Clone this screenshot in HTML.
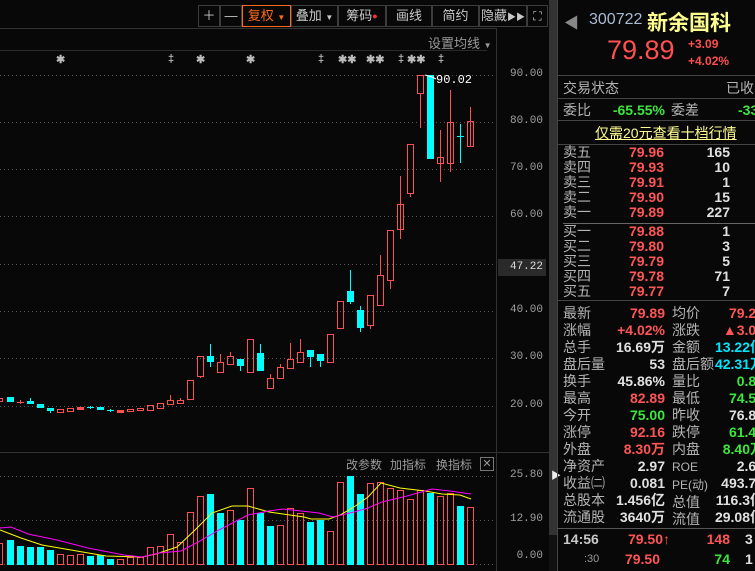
<!DOCTYPE html>
<html><head><meta charset="utf-8"><style>
*{margin:0;padding:0;box-sizing:border-box}
body{width:755px;height:571px;background:#080808;overflow:hidden;position:relative;font-family:"Liberation Sans","Noto Sans CJK SC",sans-serif;color:#c8c8c8}
.a{position:absolute;white-space:nowrap}
.tb{position:absolute;top:5px;height:22px;border:1px solid #3c3c3c;color:#c8c8c8;font-size:13px;line-height:20px;text-align:center}
.lab{position:absolute;left:563px;font-size:14px;color:#b4b4b4;line-height:16px}
.num{position:absolute;font-size:14px;line-height:16px;text-align:right;font-weight:bold;white-space:nowrap}
.r{color:#ff5555}.g{color:#3ce63c}.w{color:#e0e0e0}.c{color:#00e6ff}
.pl{position:absolute;left:498px;width:45px;text-align:right;font-family:"Liberation Mono",monospace;font-size:11px;color:#a0a0a0}
</style></head><body>
<div class="tb" style="left:198px;width:22px">＋</div>
<div class="tb" style="left:220px;width:22px">—</div>
<div class="tb" style="left:242px;width:49px;border-color:#ff6a1a;color:#ff6a1a">复权 <span style="font-size:8px">▼</span></div>
<div class="tb" style="left:291px;width:47px">叠加 <span style="font-size:8px">▼</span></div>
<div class="tb" style="left:338px;width:48px">筹码<span style="color:#ff3030;font-size:9px;vertical-align:top">●</span></div>
<div class="tb" style="left:386px;width:46px">画线</div>
<div class="tb" style="left:432px;width:47px">简约</div>
<div class="tb" style="left:479px;width:48px">隐藏<span style="font-size:9px">▶▶</span></div>
<div class="tb" style="left:527px;width:21px;font-size:12px">⛶</div>
<div class="a" style="left:0;top:28px;width:496px;height:1px;background:#333"></div>
<div class="a" style="left:0;top:50px;width:487px;height:1px;background:#2a2a2a"></div>
<div class="a" style="left:428px;top:33px;font-size:13px;color:#9a9a9a">设置均线 <span style="font-size:8px">▼</span></div>
<div class="a" style="top:53px;left:0;width:496px;height:12px;font-size:11px;color:#bbb;font-weight:bold">
<span class="a" style="left:56px">✱</span><span class="a" style="left:168px">‡</span><span class="a" style="left:196px">✱</span><span class="a" style="left:246px">✱</span><span class="a" style="left:318px">‡</span><span class="a" style="left:338px">✱✱</span><span class="a" style="left:366px">✱✱</span><span class="a" style="left:398px">‡</span><span class="a" style="left:407px">✱✱</span><span class="a" style="left:438px">‡</span>
</div>
<div class="a" style="left:496px;top:28px;width:1px;height:543px;background:#333"></div>
<div class="a" style="left:0;top:452px;width:549px;height:1px;background:#333"></div>
<div class="a" style="left:549px;top:0;width:8px;height:571px;background:#333"></div>
<div class="a" style="left:549px;top:535px;width:8px;height:36px;background:#111"></div>
<div class="a" style="left:551px;top:467px;font-size:10px;color:#eee">▶</div>
<div class="a" style="left:557px;top:0;width:1px;height:571px;background:#444"></div>

<svg class="a" style="left:0;top:0" width="549" height="571" shape-rendering="crispEdges">
<g stroke="#555" stroke-dasharray="1,3" stroke-width="1">
<line x1="0" y1="75.5" x2="495" y2="75.5"/><line x1="0" y1="122.5" x2="495" y2="122.5"/><line x1="0" y1="169.5" x2="495" y2="169.5"/><line x1="0" y1="216.5" x2="495" y2="216.5"/><line x1="0" y1="264.5" x2="495" y2="264.5"/><line x1="0" y1="311.5" x2="495" y2="311.5"/><line x1="0" y1="358.5" x2="495" y2="358.5"/><line x1="0" y1="406.5" x2="495" y2="406.5"/>
<line x1="0" y1="476.5" x2="495" y2="476.5"/><line x1="0" y1="520.5" x2="495" y2="520.5"/><line x1="0" y1="564.5" x2="495" y2="564.5"/>
</g>
<g stroke="#ff5050" stroke-width="1" fill="none">
<line x1="170.5" y1="395" x2="170.5" y2="400"/><line x1="180.5" y1="398" x2="180.5" y2="400"/><line x1="200.5" y1="376" x2="200.5" y2="378"/>
<line x1="220.5" y1="354" x2="220.5" y2="362"/><line x1="230.5" y1="352" x2="230.5" y2="356"/><line x1="270.5" y1="374" x2="270.5" y2="378"/><line x1="280.5" y1="364" x2="280.5" y2="367"/><line x1="290.5" y1="343" x2="290.5" y2="359"/><line x1="300.5" y1="339" x2="300.5" y2="352"/>
<line x1="340.5" y1="328" x2="340.5" y2="329"/><line x1="370.5" y1="325" x2="370.5" y2="329"/><line x1="380.5" y1="255" x2="380.5" y2="275"/><line x1="390.5" y1="280" x2="390.5" y2="289"/><line x1="400.5" y1="176" x2="400.5" y2="239"/><line x1="410.5" y1="193" x2="410.5" y2="197"/><line x1="420.5" y1="93" x2="420.5" y2="128"/><line x1="440.5" y1="130" x2="440.5" y2="182"/><line x1="450.5" y1="90" x2="450.5" y2="172"/><line x1="470.5" y1="107" x2="470.5" y2="147"/><line x1="20.5" y1="400" x2="20.5" y2="404"/><line x1="17" y1="402.5" x2="24" y2="402.5"/>
<rect x="-3.5" y="398.5" width="6" height="3"/>
<rect x="57.5" y="409.5" width="6" height="3"/><rect x="67.5" y="408.5" width="6" height="3"/>
<rect x="127.5" y="409.5" width="6" height="2"/><rect x="137.5" y="408.5" width="6" height="2"/><rect x="147.5" y="405.5" width="6" height="5"/><rect x="157.5" y="403.5" width="6" height="5"/><rect x="167.5" y="400.5" width="6" height="4"/><rect x="177.5" y="400.5" width="6" height="3"/><rect x="187.5" y="380.5" width="6" height="19"/><rect x="197.5" y="356.5" width="6" height="20"/>
<rect x="217.5" y="362.5" width="6" height="10"/><rect x="227.5" y="356.5" width="6" height="8"/><rect x="247.5" y="339.5" width="6" height="33"/><rect x="267.5" y="378.5" width="6" height="10"/><rect x="277.5" y="367.5" width="6" height="11"/><rect x="287.5" y="359.5" width="6" height="9"/><rect x="297.5" y="352.5" width="6" height="10"/>
<rect x="327.5" y="334.5" width="6" height="28"/><rect x="337.5" y="301.5" width="6" height="27"/><rect x="367.5" y="295.5" width="6" height="30"/><rect x="377.5" y="275.5" width="6" height="30"/><rect x="387.5" y="230.5" width="6" height="50"/><rect x="397.5" y="204.5" width="6" height="25"/><rect x="407.5" y="144.5" width="6" height="49"/><rect x="417.5" y="75.5" width="6" height="18"/><rect x="437.5" y="157.5" width="6" height="6"/><rect x="447.5" y="122.5" width="6" height="41"/><rect x="467.5" y="121.5" width="6" height="25"/>
</g>
<g fill="#ff5050"><rect x="77" y="407" width="7" height="3"/><rect x="117" y="410" width="7" height="3"/></g>
<g stroke="#00ffff" stroke-width="1">
<line x1="30.5" y1="398" x2="30.5" y2="401"/><line x1="50.5" y1="411" x2="50.5" y2="413"/><line x1="90.5" y1="406" x2="90.5" y2="409"/><line x1="87" y1="407.5" x2="94" y2="407.5"/><line x1="110.5" y1="409" x2="110.5" y2="412"/><line x1="107" y1="410.5" x2="114" y2="410.5"/>
<line x1="210.5" y1="344" x2="210.5" y2="367"/><line x1="240.5" y1="366" x2="240.5" y2="371"/><line x1="260.5" y1="344" x2="260.5" y2="353"/><line x1="310.5" y1="357" x2="310.5" y2="367"/><line x1="320.5" y1="361" x2="320.5" y2="367"/><line x1="350.5" y1="270" x2="350.5" y2="304"/><line x1="360.5" y1="306" x2="360.5" y2="332"/><line x1="460.5" y1="124" x2="460.5" y2="163"/><line x1="457" y1="136.5" x2="464" y2="136.5"/>
</g>
<g fill="#00ffff">
<rect x="7" y="397" width="7" height="5"/><rect x="27" y="401" width="7" height="3"/><rect x="37" y="404" width="7" height="4"/><rect x="47" y="408" width="7" height="3"/><rect x="97" y="407" width="7" height="3"/>
<rect x="207" y="356" width="7" height="6"/><rect x="237" y="359" width="7" height="7"/><rect x="257" y="353" width="7" height="18"/><rect x="307" y="350" width="7" height="7"/><rect x="317" y="354" width="7" height="7"/><rect x="347" y="291" width="7" height="11"/><rect x="357" y="310" width="7" height="18"/><rect x="427" y="75" width="7" height="84"/>
</g>
<polyline points="425,75 432,77 436,79" stroke="#fff" fill="none" shape-rendering="auto"/>
<g fill="#00ffff">
<rect x="7" y="540" width="7" height="25"/><rect x="17" y="546" width="7" height="19"/><rect x="27" y="547" width="7" height="18"/><rect x="37" y="547" width="7" height="18"/><rect x="47" y="550" width="7" height="15"/><rect x="87" y="556" width="7" height="9"/><rect x="97" y="555" width="7" height="10"/><rect x="107" y="559" width="7" height="6"/>
<rect x="207" y="494" width="7" height="71"/><rect x="217" y="513" width="7" height="52"/><rect x="237" y="520" width="7" height="45"/><rect x="257" y="513" width="7" height="52"/><rect x="267" y="526" width="7" height="39"/><rect x="307" y="522" width="7" height="43"/><rect x="317" y="520" width="7" height="45"/><rect x="347" y="476" width="7" height="89"/><rect x="357" y="494" width="7" height="71"/><rect x="427" y="493" width="7" height="72"/><rect x="457" y="506" width="7" height="59"/>
</g>
<g fill="none" stroke="#ff5050">
<rect x="-3.5" y="543.5" width="6" height="21"/><rect x="57.5" y="554.5" width="6" height="10"/><rect x="67.5" y="555.5" width="6" height="9"/><rect x="77.5" y="554.5" width="6" height="10"/><rect x="117.5" y="559.5" width="6" height="5"/><rect x="127.5" y="557.5" width="6" height="7"/><rect x="137.5" y="557.5" width="6" height="7"/><rect x="147.5" y="547.5" width="6" height="17"/><rect x="157.5" y="546.5" width="6" height="18"/><rect x="167.5" y="534.5" width="6" height="30"/><rect x="177.5" y="542.5" width="6" height="22"/><rect x="187.5" y="512.5" width="6" height="52"/><rect x="197.5" y="496.5" width="6" height="68"/>
<rect x="227.5" y="510.5" width="6" height="54"/><rect x="247.5" y="488.5" width="6" height="76"/><rect x="277.5" y="525.5" width="6" height="39"/><rect x="287.5" y="508.5" width="6" height="56"/><rect x="297.5" y="513.5" width="6" height="51"/><rect x="327.5" y="531.5" width="6" height="33"/><rect x="337.5" y="482.5" width="6" height="82"/><rect x="367.5" y="483.5" width="6" height="81"/><rect x="377.5" y="482.5" width="6" height="82"/><rect x="387.5" y="488.5" width="6" height="76"/><rect x="397.5" y="490.5" width="6" height="74"/><rect x="407.5" y="499.5" width="6" height="65"/><rect x="417.5" y="490.5" width="6" height="74"/><rect x="437.5" y="496.5" width="6" height="68"/><rect x="447.5" y="493.5" width="6" height="71"/><rect x="467.5" y="507.5" width="6" height="57"/>
</g>
<polyline shape-rendering="auto" fill="none" stroke="#ffff00" stroke-width="1" points="0,530 21,538 42,545 71,550 106,556 142,557 156,554 177,547 195,530 212,513 232,506 248,506 269,512 283,514 304,517 311,519 329,519 340,515 354,507 368,497 381,483 400,488 425,491 442,494 460,495 471,499"/>
<polyline shape-rendering="auto" fill="none" stroke="#ff00ff" stroke-width="1" points="0,528 11,527 28,534 57,540 88,548 124,555 142,557 159,553 181,551 198,542 219,530 248,515 269,511 283,509 301,511 319,513 333,517 354,512 368,508 382,502 407,496 432,489 450,491 471,494"/>
</svg>
<div class="a" style="left:436px;top:73px;font-family:'Liberation Mono',monospace;font-size:12px;color:#fff">90.02</div>
<div class="pl" style="top:68px">90.00</div><div class="pl" style="top:115px">80.00</div><div class="pl" style="top:162px">70.00</div><div class="pl" style="top:209px">60.00</div><div class="pl" style="top:304px">40.00</div><div class="pl" style="top:351px">30.00</div><div class="pl" style="top:399px">20.00</div>
<div class="a" style="left:498px;top:259px;width:48px;height:17px;background:#2a2a2a"></div>
<div class="pl" style="top:261px;color:#ddd">47.22</div>
<div class="pl" style="top:469px">25.80</div><div class="pl" style="top:513px">12.90</div><div class="pl" style="top:550px">0.00</div>
<div class="a" style="left:346px;top:456px;font-size:12px;color:#9a9a9a">改参数</div>
<div class="a" style="left:390px;top:456px;font-size:12px;color:#9a9a9a">加指标</div>
<div class="a" style="left:436px;top:456px;font-size:12px;color:#9a9a9a">换指标</div>
<div class="a" style="left:480px;top:457px;width:14px;height:14px;border:1px solid #777;color:#999;font-size:11px;line-height:12px;text-align:center">✕</div>

<div class="a" style="left:564px;top:12px;color:#888;font-size:15px">◀</div>
<div class="a" style="left:589px;top:11px;color:#a8bcd4;font-size:16px">300722</div>
<div class="a" style="left:647px;top:7px;color:#ffff90;font-size:21px;font-weight:bold">新余国科</div>
<div class="a" style="left:607px;top:35px;color:#ff5050;font-size:27px">79.89</div>
<div class="a" style="left:688px;top:37px;color:#ff5050;font-size:12px;font-weight:bold">+3.09</div>
<div class="a" style="left:688px;top:54px;color:#ff5050;font-size:12px;font-weight:bold">+4.02%</div>
<div class="a" style="left:557px;top:75px;width:198px;height:1px;background:#444"></div>
<div class="lab" style="top:80px">交易状态</div><div class="lab" style="top:80px;left:726px">已收</div>
<div class="a" style="left:557px;top:98px;width:198px;height:1px;background:#444"></div>
<div class="lab" style="top:102px">委比</div><div class="num g" style="top:102px;left:600px;width:65px">-65.55%</div><div class="lab" style="top:102px;left:671px">委差</div><div class="num g" style="top:102px;left:738px">-33</div>
<div class="a" style="left:557px;top:120px;width:198px;height:1px;background:#444"></div>
<div class="a" style="left:595px;top:123px;color:#ffff90;font-size:14px;text-decoration:underline">仅需20元查看十档行情</div>
<div class="a" style="left:557px;top:144px;width:198px;height:1px;background:#444"></div>
<div class="lab" style="top:145px;line-height:15px">卖五<br>卖四<br>卖三<br>卖二<br>卖一</div>
<div class="num r" style="top:145px;left:600px;width:64px;line-height:15px">79.96<br>79.93<br>79.91<br>79.90<br>79.89</div>
<div class="num w" style="top:145px;left:680px;width:50px;line-height:15px">165<br>10<br>1<br>15<br>227</div>
<div class="a" style="left:563px;top:223px;width:192px;height:1px;background:#666"></div>
<div class="lab" style="top:224px;line-height:15px">买一<br>买二<br>买三<br>买四<br>买五</div>
<div class="num r" style="top:224px;left:600px;width:64px;line-height:15px">79.88<br>79.80<br>79.79<br>79.78<br>79.77</div>
<div class="num w" style="top:224px;left:680px;width:50px;line-height:15px">1<br>3<br>5<br>71<br>7</div>
<div class="a" style="left:557px;top:300px;width:198px;height:1px;background:#444"></div>
<div class="lab" style="top:305px;line-height:17px">最新<br>涨幅<br>总手<br>盘后量<br>换手<br>最高<br>今开<br>涨停<br>外盘<br>净资产<br>收益㈡<br>总股本<br>流通股</div>
<div class="num" style="top:305px;left:590px;width:75px;line-height:17px"><span class="r">79.89</span><br><span class="r">+4.02%</span><br><span class="w">16.69万</span><br><span class="w">53</span><br><span class="w">45.86%</span><br><span class="r">82.89</span><br><span class="g">75.00</span><br><span class="r">92.16</span><br><span class="r">8.30万</span><br><span class="w">2.97</span><br><span class="w">0.081</span><br><span class="w">1.456亿</span><br><span class="w">3640万</span></div>
<div class="lab" style="top:305px;left:672px;line-height:17px">均价<br>涨跌<br>金额<br>盘后额<br>量比<br>最低<br>昨收<br>跌停<br>内盘<br><span style="font-size:12px">ROE</span><br><span style="font-size:12px">PE(动)</span><br>总值<br>流值</div>
<div class="num" style="top:305px;left:684px;width:80px;line-height:17px"><span class="r">79.26</span><br><span class="r">▲3.09</span><br><span class="c">13.22亿</span><br><span class="c">42.31万</span><br><span class="g">0.87</span><br><span class="g">74.50</span><br><span class="w">76.80</span><br><span class="g">61.44</span><br><span class="g">8.40万</span><br><span class="w">2.62</span><br><span class="w">493.74</span><br><span class="w">116.3亿</span><br><span class="w">29.08亿</span></div>
<div class="a" style="left:557px;top:528px;width:198px;height:1px;background:#555"></div>
<div class="a" style="left:563px;top:531px;font-size:14px;font-weight:bold;color:#c8c8c8">14:56</div>
<div class="num r" style="top:531px;left:600px;width:70px">79.50↑</div>
<div class="num r" style="top:531px;left:690px;width:40px">148</div>
<div class="num w" style="top:531px;left:745px">3</div>
<div class="a" style="left:584px;top:553px;font-size:11px;color:#999">:30</div>
<div class="num r" style="top:551px;left:600px;width:60px">79.50</div>
<div class="num g" style="top:551px;left:690px;width:40px">74</div>
<div class="num w" style="top:551px;left:745px">1</div>
</body></html>
